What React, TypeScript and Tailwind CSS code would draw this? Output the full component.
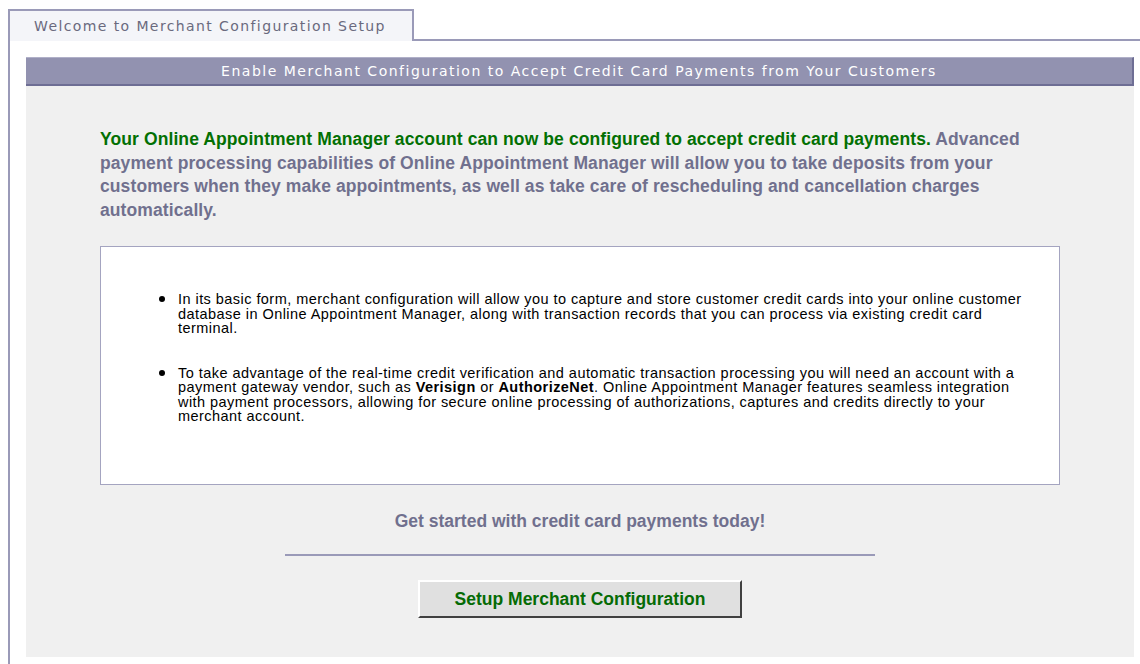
import React from 'react'

export default function App() {
    return (
        <div className="min-h-[664px] bg-white pt-[9px]">
            {/* tab strip */}
            <div className="flex items-end">
                <div className="ml-[8px] w-[406px] h-[32px] border-t-2 border-l-2 border-r-2 border-[#9a9ab8] bg-[#f4f5f9] pl-[24px] pt-[5px] font-['DejaVu_Sans',Verdana,sans-serif] text-[14px] tracking-[1.4px] text-[#6a6a7e]">
                    Welcome to Merchant Configuration Setup
                </div>
                <div className="flex-1 border-b-2 border-[#9a9ab8]" />
            </div>

            <div className="ml-[8px] border-l-2 border-[#9a9ab8] pl-[16px] pr-[6px] pt-[16px] pb-[7px]">
                {/* section heading */}
                <div className="h-[29px] bg-[#9292b0] border-t border-[#b0b0c8] border-b-2 border-r-2 border-b-[#6e6e94] border-r-[#6e6e94] flex items-center justify-center font-['DejaVu_Sans',Verdana,sans-serif] text-[14px] tracking-[1.5px] text-white">
                    Enable Merchant Configuration to Accept Credit Card Payments from Your Customers
                </div>

                <div className="bg-[#f0f0f0] pt-[42px] pb-[39px] font-['Liberation_Sans',Arial,sans-serif]">
                    <p className="ml-[74px] w-[935px] text-[17.5px] tracking-[0.1px] font-bold leading-[23.5px] text-[#70708e]">
                        <span className="text-[#037003]">Your Online Appointment Manager account can now be configured to accept credit card payments.</span>{' '}
                        Advanced payment processing capabilities of Online Appointment Manager will allow you to take deposits from your customers when they make appointments, as well as take care of rescheduling and cancellation charges automatically.
                    </p>

                    <div className="mx-[74px] mt-[24px] h-[239px] bg-white border border-[#a4a4c0] pt-[45px] pl-[58px] pr-[22px] text-[14.5px] leading-[14.5px] tracking-[0.45px] text-black">
                        <ul className="flex flex-col gap-[30px]">
                            <li className="flex gap-[13px]">
                                <span className="mt-[4px] w-[6px] h-[6px] rounded-full bg-black shrink-0" />
                                <span>
                                    In its basic form, merchant configuration will allow you to capture and store customer credit cards into your online customer database in Online Appointment Manager, along with transaction records that you can process via existing credit card terminal.
                                </span>
                            </li>
                            <li className="flex gap-[13px]">
                                <span className="mt-[4px] w-[6px] h-[6px] rounded-full bg-black shrink-0" />
                                <span>
                                    To take advantage of the real-time credit verification and automatic transaction processing you will need an account with a payment gateway vendor, such as <b>Verisign</b> or <b>AuthorizeNet</b>. Online Appointment Manager features seamless integration with payment processors, allowing for secure online processing of authorizations, captures and credits directly to your merchant account.
                                </span>
                            </li>
                        </ul>
                    </div>

                    <div className="mt-[26px] text-center text-[17.5px] leading-[20px] font-bold text-[#70708e]">
                        Get started with credit card payments today!
                    </div>

                    <div className="mx-auto mt-[23px] w-[590px] h-[2px] bg-[#9a9ab8]" />

                    <div className="mt-[24px] flex justify-center">
                        <button className="w-[324px] h-[38px] bg-[#e0e0e0] border-2 border-t-white border-l-white border-r-[#404040] border-b-[#404040] text-[17.5px] font-bold text-[#056b05]">
                            Setup Merchant Configuration
                        </button>
                    </div>
                </div>
            </div>
        </div>
    )
}
